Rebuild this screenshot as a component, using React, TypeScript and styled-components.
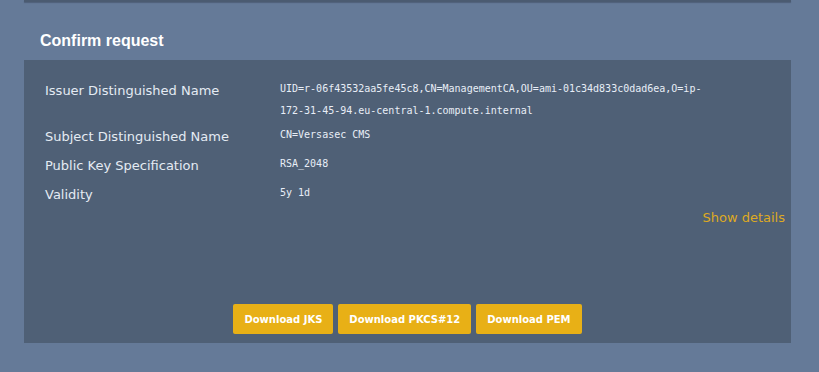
import React from "react";
import styled, { createGlobalStyle } from "styled-components";

const GlobalStyle = createGlobalStyle`
  html, body {
    margin: 0;
    padding: 0;
    background: #657a98;
  }
  body {
    font-family: "DejaVu Sans", sans-serif;
  }
`;

const Page = styled.div`
  width: 819px;
  height: 372px;
  overflow: hidden;
  padding: 0 28px 0 24px;
  box-sizing: border-box;
`;

const PrevCardEdge = styled.div`
  height: 2px;
  background: #4b5b71;
  box-shadow: 0 1px 1px rgba(40, 50, 66, 0.35);
`;

const Title = styled.h2`
  margin: 29px 0 9px 16px;
  font-family: "Liberation Sans", Arial, sans-serif;
  font-size: 16px;
  line-height: 20px;
  font-weight: bold;
  color: #ffffff;
`;

const Card = styled.div`
  display: flex;
  flex-direction: column;
  height: 283px;
  box-sizing: border-box;
  padding: 18px 6px 9px 21px;
  background: #4f6076;
`;

const Details = styled.div`
  display: grid;
  grid-template-columns: 235px 424px;
  row-gap: 3px;
  align-items: start;
`;

const Label = styled.div`
  font-family: "DejaVu Sans", sans-serif;
  font-size: 13px;
  line-height: 26px;
  color: #e4ebf3;
`;

const Value = styled.div`
  font-family: "DejaVu Sans Mono", monospace;
  font-size: 10px;
  line-height: 21.5px;
  color: #e8eef7;
  word-break: break-all;
`;

const DetailsLink = styled.a`
  align-self: flex-end;
  font-size: 13px;
  line-height: 20px;
  color: #deaa22;
  cursor: pointer;
`;

const Actions = styled.div`
  margin-top: auto;
  display: flex;
  justify-content: center;
  gap: 5px;
  padding-right: 15px;
`;

const Button = styled.button`
  height: 30px;
  padding: 0 11px;
  border: none;
  border-radius: 2px;
  background: #e8b016;
  color: #ffffff;
  font-family: "DejaVu Sans", sans-serif;
  font-size: 10px;
  font-weight: bold;
  cursor: pointer;
`;

const rows: [string, string][] = [
  [
    "Issuer Distinguished Name",
    "UID=r-06f43532aa5fe45c8,CN=ManagementCA,OU=ami-01c34d833c0dad6ea,O=ip-172-31-45-94.eu-central-1.compute.internal",
  ],
  ["Subject Distinguished Name", "CN=Versasec CMS"],
  ["Public Key Specification", "RSA_2048"],
  ["Validity", "5y 1d"],
];

const App: React.FC = () => (
  <Page>
    <GlobalStyle />
    <PrevCardEdge />
    <Title>Confirm request</Title>
    <Card>
      <Details>
        {rows.map(([label, value]) => (
          <React.Fragment key={label}>
            <Label>{label}</Label>
            <Value>{value}</Value>
          </React.Fragment>
        ))}
      </Details>
      <DetailsLink>Show details</DetailsLink>
      <Actions>
        <Button>Download JKS</Button>
        <Button>Download PKCS#12</Button>
        <Button>Download PEM</Button>
      </Actions>
    </Card>
  </Page>
);

export default App;
